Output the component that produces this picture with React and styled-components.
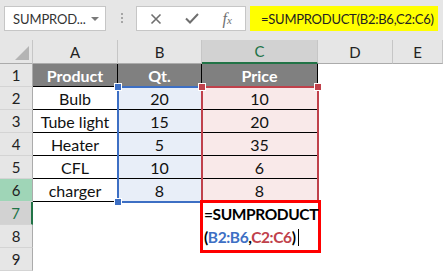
import React from 'react';
import styled, { createGlobalStyle, css } from 'styled-components';

const GlobalStyle = createGlobalStyle`
  html, body {
    margin: 0;
    padding: 0;
    background: #ffffff;
  }
  * {
    box-sizing: border-box;
  }
`;

const GREEN = '#217346';
const RANGE_BLUE = '#3d6fc4';
const RANGE_RED = '#c0414b';

const Frame = styled.div`
  width: 443px;
  height: 271px;
  overflow: hidden;
  font-family: Lato, 'Liberation Sans', sans-serif;
  background: #ffffff;
`;

/* ---------- formula bar ---------- */

const FormulaBar = styled.div`
  display: flex;
  align-items: flex-start;
  height: 40px;
  padding: 6px 0 0 4px;
  background: #e6e6e6;
`;

const NameBox = styled.div`
  display: flex;
  align-items: center;
  justify-content: space-between;
  width: 102px;
  height: 25px;
  padding: 0 6px 0 8px;
  background: #ffffff;
  border: 1px solid #c6c6c6;
  font-size: 13px;
  letter-spacing: -0.1px;
  color: #333333;
`;

const Caret = styled.span`
  width: 0;
  height: 0;
  border-left: 4px solid transparent;
  border-right: 4px solid transparent;
  border-top: 4px solid #7a7a7a;
`;

const Grip = styled.div`
  display: flex;
  flex-direction: column;
  gap: 2px;
  margin: 7px 13px 0 15px;

  span {
    width: 2px;
    height: 2px;
    background: #a6a6a6;
  }
`;

const ActionBox = styled.div`
  display: flex;
  width: 110px;
  height: 25px;
  padding-left: 1px;
  background: #ffffff;
  border: 1px solid #c6c6c6;
`;

const IconSlot = styled.div`
  display: flex;
  align-items: center;
  justify-content: center;
  width: 36px;
  color: #6f6f6f;
`;

const FxLabel = styled.span`
  font-family: 'Liberation Serif', serif;
  font-style: italic;
  font-size: 16px;
  color: #707070;

  sub {
    font-size: 11px;
    vertical-align: 0;
  }
`;

const FormulaInput = styled.div`
  display: flex;
  align-items: center;
  width: 188px;
  height: 25px;
  margin-left: 4px;
  padding-left: 11px;
  background: #ffff00;
  font-size: 13px;
  letter-spacing: -0.25px;
  color: #222222;
  white-space: nowrap;
`;

/* ---------- sheet grid ---------- */

const Sheet = styled.div`
  position: relative;
  display: grid;
  grid-template-columns: 33px 85px 84px 116px 75px 50px;
  grid-template-rows: 24px repeat(9, 23px);
`;

const Corner = styled.div`
  position: relative;
  background: #e6e6e6;
  border-right: 1px solid #c6c6c6;
  border-bottom: 1px solid #ababab;

  &::after {
    content: '';
    position: absolute;
    right: 3px;
    bottom: 3px;
    border-left: 14px solid transparent;
    border-bottom: 14px solid #b4b4b4;
  }
`;

const ColHeader = styled.div`
  display: flex;
  align-items: center;
  justify-content: center;
  font-size: 15px;
  color: #222222;
  background: #e6e6e6;
  border-right: 1px solid #c6c6c6;
  border-bottom: 1px solid #ababab;
  ${p => p.$active && css`
    background: #d2d2d2;
    color: ${GREEN};
    border-bottom: 2px solid ${GREEN};
  `}
`;

const rowHeaderTone = {
  plain: css`
    background: #e6e6e6;
    color: #222222;
  `,
  range: css`
    background: #9fd5b7;
    color: #222222;
  `,
  active: css`
    background: #d2d2d2;
    color: ${GREEN};
    border-right: 2px solid ${GREEN};
  `,
};

const RowHeader = styled.div`
  display: flex;
  align-items: center;
  justify-content: center;
  font-size: 15px;
  border-right: 1px solid #ababab;
  border-bottom: 1px solid #d4d4d4;
  ${p => rowHeaderTone[p.$tone || 'plain']}
`;

const fills = {
  blue: '#e8eef8',
  red: '#f9e9e9',
};

const Cell = styled.div`
  display: flex;
  align-items: center;
  justify-content: center;
  font-size: 16px;
  line-height: 23px;
  color: #111111;
  background: ${p => fills[p.$fill] || '#ffffff'};
  ${p => p.$boxed && css`
    border-right: 1px solid #000000;
    border-bottom: 1px solid #000000;
  `}
  ${p => p.$head && css`
    background: #808080;
    color: #ffffff;
    font-weight: 700;
  `}
`;

/* ---------- reference highlights drawn over the grid ---------- */

const RangeFrame = styled.div`
  position: absolute;
  left: ${p => p.$x}px;
  top: ${p => p.$y}px;
  width: ${p => p.$w}px;
  height: ${p => p.$h}px;
  border: 2px solid ${p => p.$color};
  pointer-events: none;
`;

const Handle = styled.div`
  position: absolute;
  left: ${p => p.$x - 3}px;
  top: ${p => p.$y - 3}px;
  width: 6px;
  height: 6px;
  background: ${p => p.$color};
  outline: 1px solid #ffffff;
`;

const EditBox = styled.div`
  position: absolute;
  left: 200px;
  top: 160px;
  width: 121px;
  height: 53px;
  padding-left: 1px;
  background: #ffffff;
  border: 3px solid #ff0000;
  font-size: 15.5px;
  font-weight: 700;
  letter-spacing: -0.4px;
  line-height: 23px;
  color: #000000;
  white-space: nowrap;
`;

const Ref = styled.span`
  color: ${p => p.$color};
`;

const Cursor = styled.span`
  display: inline-block;
  width: 1px;
  height: 17px;
  margin-left: 2px;
  vertical-align: -3px;
  background: #000000;
`;

const columns = ['A', 'B', 'C', 'D', 'E'];

const rows = [
  ['Product', 'Qt.', 'Price'],
  ['Bulb', '20', '10'],
  ['Tube light', '15', '20'],
  ['Heater', '5', '35'],
  ['CFL', '10', '6'],
  ['charger', '8', '8'],
];

const ROW_COUNT = 9;

const rowTone = n => (n === 6 ? 'range' : n === 7 ? 'active' : 'plain');

const CloseIcon = () => (
  <svg width="12" height="12" viewBox="0 0 12 12">
    <path d="M1.5 1.5 L10.5 10.5 M10.5 1.5 L1.5 10.5" stroke="currentColor" strokeWidth="1.6" fill="none" />
  </svg>
);

const CheckIcon = () => (
  <svg width="14" height="11" viewBox="0 0 14 11">
    <path d="M1 5.5 L5 9.5 L13 1" stroke="currentColor" strokeWidth="2" fill="none" />
  </svg>
);

export default function App() {
  const cellFor = (r, c) => {
    const row = r <= rows.length ? rows[r - 1] : null;
    const inTable = row && c < 3;
    const text = inTable ? row[c] : '';
    let fill;
    if (r >= 2 && r <= 6 && c === 1) fill = 'blue';
    if (r >= 2 && r <= 6 && c === 2) fill = 'red';
    return (
      <Cell key={`${r}-${c}`} $boxed={inTable} $head={r === 1 && c < 3} $fill={fill}>
        {text}
      </Cell>
    );
  };

  return (
    <Frame>
      <GlobalStyle />
      <FormulaBar>
        <NameBox>
          SUMPROD...
          <Caret />
        </NameBox>
        <Grip>
          <span />
          <span />
          <span />
        </Grip>
        <ActionBox>
          <IconSlot><CloseIcon /></IconSlot>
          <IconSlot><CheckIcon /></IconSlot>
          <IconSlot><FxLabel>f<sub>x</sub></FxLabel></IconSlot>
        </ActionBox>
        <FormulaInput>=SUMPRODUCT(B2:B6,C2:C6)</FormulaInput>
      </FormulaBar>

      <Sheet>
        <Corner />
        {columns.map(col => (
          <ColHeader key={col} $active={col === 'C'}>{col}</ColHeader>
        ))}

        {Array.from({ length: ROW_COUNT }, (_, i) => i + 1).map(r => (
          <React.Fragment key={r}>
            <RowHeader $tone={rowTone(r)}>{r}</RowHeader>
            {columns.map((_, c) => cellFor(r, c))}
          </React.Fragment>
        ))}

        <RangeFrame $x={117} $y={46} $w={86} $h={117} $color={RANGE_BLUE} />
        <RangeFrame $x={201} $y={46} $w={118} $h={117} $color={RANGE_RED} />
        <Handle $x={118} $y={47} $color={RANGE_BLUE} />
        <Handle $x={118} $y={162} $color={RANGE_BLUE} />
        <Handle $x={202} $y={47} $color={RANGE_RED} />
        <Handle $x={318} $y={47} $color={RANGE_RED} />

        <EditBox>
          =SUMPRODUCT
          <br />
          (<Ref $color={RANGE_BLUE}>B2:B6</Ref>,<Ref $color={RANGE_RED}>C2:C6</Ref>)
          <Cursor />
        </EditBox>
      </Sheet>
    </Frame>
  );
}
